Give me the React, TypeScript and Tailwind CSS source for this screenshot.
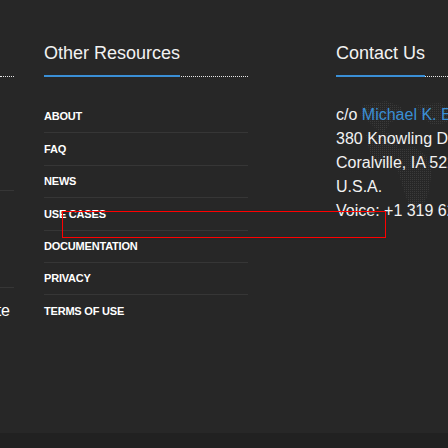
import type { ReactNode } from 'react'

const links = ['About', 'FAQ', 'News', 'Use Cases', 'Documentation', 'Privacy', 'Terms of Use']

const Heading = ({ children }: { children: ReactNode }) => (
  <div className="border-b border-dotted border-white/90">
    <h3 className="-mb-px inline-block border-b-2 border-solid border-[#3a8fd6] pb-[10px] text-[18px] leading-6 text-[#f2f2f2]">
      {children}
    </h3>
  </div>
)

// faint dotted world map behind the contact block
const MapDots = () => (
  <svg className="pointer-events-none absolute left-0 top-[-4px] h-[130px] w-[140px]" viewBox="0 0 140 130">
    <defs>
      <pattern id="dots" width="2" height="2" patternUnits="userSpaceOnUse">
        <rect width="1" height="1" fill="#3a3a3a" />
      </pattern>
    </defs>
    <g fill="url(#dots)">
      <path d="M27 6 L50 2 L66 8 L64 18 L54 24 L48 34 L40 30 L32 22 L24 16 Z" />
      <path d="M30 36 L52 34 L62 42 L60 58 L52 66 L42 64 L34 54 Z" />
      <path d="M60 50 L78 48 L90 56 L96 72 L92 96 L84 112 L74 110 L68 92 L62 72 Z" />
      <path d="M80 6 L104 4 L118 12 L110 24 L96 26 L86 18 Z" />
    </g>
  </svg>
)

export default function App() {
  return (
    <div
      className="relative flex h-[448px] w-[448px] flex-col overflow-hidden bg-[#272727] text-white"
      style={{ fontFamily: '"Liberation Sans", Arial, sans-serif' }}
    >
      <div className="flex flex-1 pt-[41px]">
        {/* cut-off column on the left */}
        <div className="w-[14px] shrink-0 overflow-hidden">
          <div className="border-b border-dotted border-white/90">
            <div className="h-[35px]" />
          </div>
          <div className="mt-[113px] border-b border-solid border-[#363636]" />
          <div className="mt-[96px] border-b border-solid border-[#363636]" />
          <div className="mt-[11px] flex justify-end pr-[4px]">
            <span className="whitespace-nowrap text-[16px] leading-6">Website</span>
          </div>
        </div>

        <div className="ml-[30px] w-[204px] shrink-0">
          <Heading>Other Resources</Heading>
          <ul className="mt-[24px]">
            {links.map((l, i) => (
              <li
                key={l}
                className={`flex h-[32.4px] items-center text-[11px] font-bold uppercase tracking-[-0.2px] text-white ${
                  i < links.length - 1 ? 'border-b border-solid border-[#363636]' : ''
                }`}
              >
                {l}
              </li>
            ))}
          </ul>
        </div>

        <div className="relative ml-[88px] w-[200px] shrink-0">
          <Heading>Contact Us</Heading>
          <div className="relative mt-[26px]">
            <MapDots />
            <div className="relative whitespace-nowrap text-[16px] leading-6 text-[#f2f2f2]">
              <p>
                c/o <span className="text-[#3a8fd6]">Michael K. Edwards</span>
              </p>
              <p>380 Knowling Drive</p>
              <p>Coralville, IA 52241</p>
              <p>U.S.A.</p>
              <p>Voice: +1 319 626 0000</p>
            </div>
          </div>
        </div>
      </div>
      <div className="h-[15px] bg-[#212121]" />

      {/* red highlight box drawn over the page */}
      <div className="pointer-events-none absolute left-[62px] top-[211px] z-10 h-[27px] w-[324px] border border-solid border-[#ff0000]" />
    </div>
  )
}
